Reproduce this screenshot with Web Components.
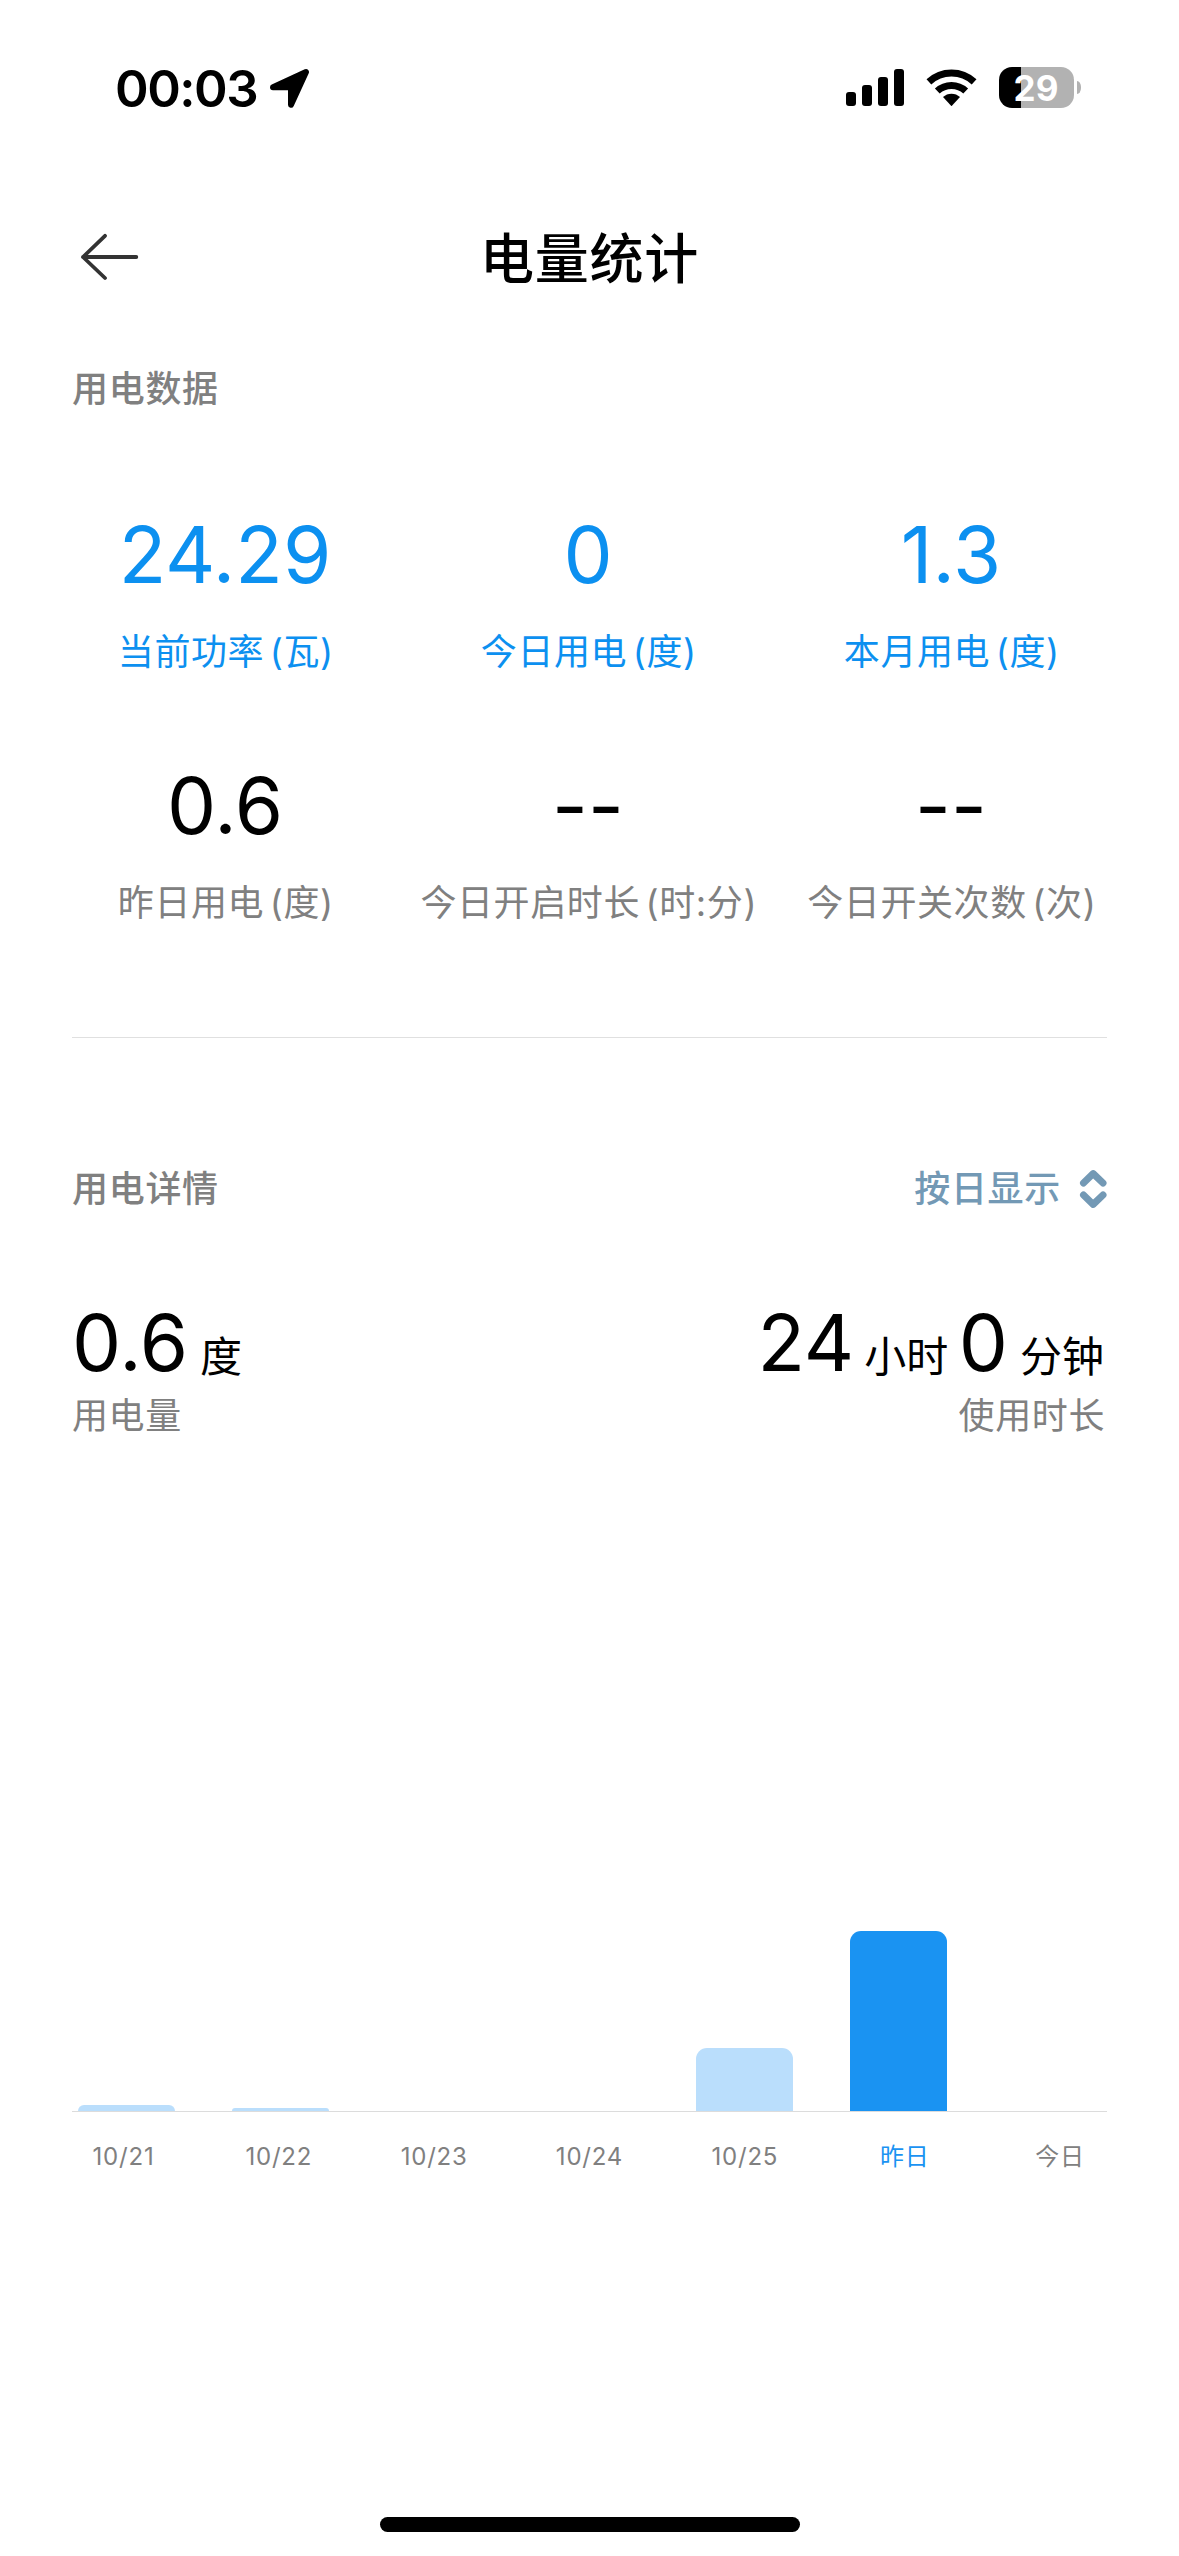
<!DOCTYPE html>
<html lang="zh-CN">
<head>
<meta charset="utf-8">
<title>电量统计</title>
<style>
html, body { margin: 0; background: #fff; }
body { font-family: Inter, "Noto Sans CJK SC", sans-serif; color: #000; }
</style>
</head>
<body>
<energy-page></energy-page>

<script>
const define = (name, html, setup) => {
  const tpl = document.createElement('template');
  tpl.innerHTML = html;
  customElements.define(name, class extends HTMLElement {
    connectedCallback() {
      if (this.shadowRoot) return;
      const root = this.attachShadow({ mode: 'open' });
      root.append(tpl.content.cloneNode(true));
      if (setup) setup(this, root);
    }
  });
};

define('status-bar', `
<style>
:host { display: flex; align-items: center; height: 175px; padding: 0 98px 0 115px; box-sizing: border-box; }
.time { width: 154px; padding-top: 1px; font-size: 51px; font-weight: 560; line-height: 61px; letter-spacing: -1.5px; white-space: nowrap; }
svg { display: block; flex: none; }
.loc { margin-right: auto; }
.wifi { margin: 0 22px; }
.battery { display: flex; align-items: center; }
.cell { width: 75px; height: 41px; border-radius: 13px; background: linear-gradient(90deg, #000 22px, #b2b2b2 22px);
  color: #fff; font-size: 35px; font-weight: 650; line-height: 42px; text-align: center; text-indent: -1px; }
.nub { width: 4px; height: 13px; margin-left: 3px; border-radius: 0 4px 4px 0 / 0 6px 6px 0; background: #b2b2b2; }
</style>
<span class="time">00:03</span>
<svg class="loc" width="41" height="41" viewBox="269 67 41 41"><path d="M273 87.3 306 72 291 104.7V87.3Z" stroke="#000" stroke-width="6" stroke-linejoin="round"/></svg>
<svg width="58" height="37" viewBox="0 0 58 37"><rect y="23" width="10" height="14" rx="3"/><rect x="16" y="16" width="10" height="21" rx="3"/><rect x="32" y="8" width="10" height="29" rx="3"/><rect x="48" width="10" height="37" rx="3"/></svg>
<svg class="wifi" width="51" height="37" viewBox="0 0 51 37"><g fill="none" stroke="#000" stroke-width="7"><path d="M2.9 12.9A33.2 33.2 0 0 1 48.1 12.9"/><path d="M11.3 22A20.8 20.8 0 0 1 39.7 22"/></g><path d="M25.5 37.2 17 28.1A12.5 12.5 0 0 1 34 28.1Z"/></svg>
<div class="battery"><div class="cell">29</div><div class="nub"></div></div>
`);

define('nav-bar', `
<style>
:host { display: grid; grid-template-columns: 72px 1fr 72px; align-items: center; height: 167px; padding: 0 72px; box-sizing: border-box; }
h1 { margin: 0; padding-top: 1px; font-size: 54px; font-weight: 500; line-height: 65px; letter-spacing: .8px; text-align: center; }
svg { display: block; margin: -4px 0 0 8px; }
</style>
<svg width="60" height="48" viewBox="80 233 60 48" fill="none" stroke="#333" stroke-width="3.8" stroke-linecap="round" stroke-linejoin="round"><path d="M105 235.8 83 257 105 278M83 257H136.3"/></svg>
<h1><slot></slot></h1>
`);

define('section-head', `
<style>
:host { display: flex; justify-content: space-between; align-items: center; height: 50px; padding: 0 72px;
  font-size: 36px; line-height: 50px; letter-spacing: .7px; font-weight: 500; color: #808080; }
</style>
<span><slot></slot></span><slot name="action"></slot>
`);

define('range-switch', `
<style>
:host { display: flex; align-items: center; gap: 18px; color: #7399b5; }
svg { display: block; }
</style>
<span><slot></slot></span>
<svg width="28" height="42" viewBox="1079 1168 28 42" fill="none" stroke="currentColor" stroke-width="7" stroke-linecap="round" stroke-linejoin="round"><path d="M1083.5 1183 1093.2 1173.6 1103 1183M1083.5 1195 1093.2 1204.4 1103 1195"/></svg>
`);

define('stat-grid', `
<style>
:host { display: grid; grid-template-columns: repeat(3, 363px); row-gap: 81px; padding-left: 43.5px; }
</style>
<slot></slot>
`);

define('stat-cell', `
<style>
:host { display: flex; flex-direction: column; align-items: center; gap: 25px; white-space: nowrap; }
.value { font-size: 78px; line-height: 95px; }
.label { font-size: 36px; line-height: 50px; letter-spacing: .6px; color: #808080; padding-left: 1.6px; }
.unit { margin-left: 5.5px; }
:host([active]) .value, :host([active]) .label { color: #0c90f0; }
</style>
<div class="value"></div>
<div class="label"><span class="name"></span><span class="unit"></span></div>
`, (host, root) => {
  root.querySelector('.value').textContent = host.getAttribute('value');
  root.querySelector('.name').textContent = host.getAttribute('name');
  root.querySelector('.unit').textContent = '(' + host.getAttribute('unit') + ')';
});

define('usage-total', `
<style>
:host { display: block; white-space: nowrap; }
:host([end]) { text-align: right; }
.row { font-size: 78px; line-height: 95px; height: 95px; display: flex; align-items: baseline; }
:host([end]) .row { justify-content: flex-end; margin-right: 3px; }
.note { margin-top: 1px; font-size: 36px; line-height: 50px; letter-spacing: .6px; color: #808080; }
:host([end]) .note { padding-right: 2px; }
::slotted(small) { font-size: 42px; line-height: 50px; margin: 0 10.5px 0 11.5px; transform: translateY(1px); }
::slotted(small:first-of-type) { margin-left: 10px; }
::slotted(small:last-of-type) { margin: 0 0 0 12px; }
</style>
<div class="row"><slot></slot></div>
<div class="note"><slot name="note"></slot></div>
`);

define('day-chart', `
<style>
:host { display: block; padding: 0 72px; }
.bars { display: flex; align-items: flex-end; gap: 57.4px; height: 400px; padding-left: 6px; border-bottom: 1px solid #dcdcdc; }
.bar { flex: none; width: 97px; background: #badefc; }
.bar.on { background: #1a93f2; }
.labels { display: flex; margin: 30px -27px 0 -26.2px; }
.labels span { flex: none; width: 155.35px; box-sizing: border-box; text-align: center; font-size: 24px; line-height: 29px; letter-spacing: .8px; color: #808080; white-space: nowrap; }
.labels .word { padding-left: 9px; }
.labels .on { color: #1a93f2; }
</style>
<div class="bars"></div><div class="labels"></div>
`, (host, root) => {
  const days = [['10/21', 6], ['10/22', 3], ['10/23', 0], ['10/24', 0], ['10/25', 63], ['昨日', 180, true], ['今日', 0]];
  const bars = root.querySelector('.bars'), labels = root.querySelector('.labels');
  for (const [name, size, on] of days) {
    const bar = document.createElement('div');
    bar.className = on ? 'bar on' : 'bar';
    bar.style.height = size + 'px';
    const r = Math.min(11, size);
    bar.style.borderRadius = `${r}px ${r}px 0 0`;
    bars.append(bar);
    const label = document.createElement('span');
    label.textContent = name;
    if (!/\d/.test(name)) label.classList.add('word');
    if (on) label.classList.add('on');
    labels.append(label);
  }
});

define('home-indicator', `
<style>:host { display: block; width: 420px; height: 15px; border-radius: 8px; background: #000; margin: 0 auto; }</style>
`);

define('energy-page', `
<style>
:host { display: flex; flex-direction: column; width: 1179px; height: 2556px; overflow: hidden; background: #fff; }
:host > * { flex: none; }
.first { margin-top: 22px; }
stat-grid { margin-top: 93px; }
hr { width: 1035px; height: 1px; margin: 109px 72px 126px; border: 0; background: #e0e0e0; }
.totals { display: flex; justify-content: space-between; margin-top: 81px; padding: 0 72px; }
day-chart { margin-top: 270px; }
home-indicator { margin-top: auto; margin-bottom: 24px; }
</style>
<status-bar></status-bar>
<nav-bar>电量统计</nav-bar>
<section-head class="first">用电数据</section-head>
<stat-grid>
  <stat-cell active value="24.29" name="当前功率" unit="瓦"></stat-cell>
  <stat-cell active value="0" name="今日用电" unit="度"></stat-cell>
  <stat-cell active value="1.3" name="本月用电" unit="度"></stat-cell>
  <stat-cell value="0.6" name="昨日用电" unit="度"></stat-cell>
  <stat-cell value="--" name="今日开启时长" unit="时:分"></stat-cell>
  <stat-cell value="--" name="今日开关次数" unit="次"></stat-cell>
</stat-grid>
<hr>
<section-head>用电详情<range-switch slot="action">按日显示</range-switch></section-head>
<div class="totals">
  <usage-total><span>0.6</span><small>度</small><span slot="note">用电量</span></usage-total>
  <usage-total end><span>24</span><small>小时</small><span>0</span><small>分钟</small><span slot="note">使用时长</span></usage-total>
</div>
<day-chart></day-chart>
<home-indicator></home-indicator>
`);
</script>
</body>
</html>
